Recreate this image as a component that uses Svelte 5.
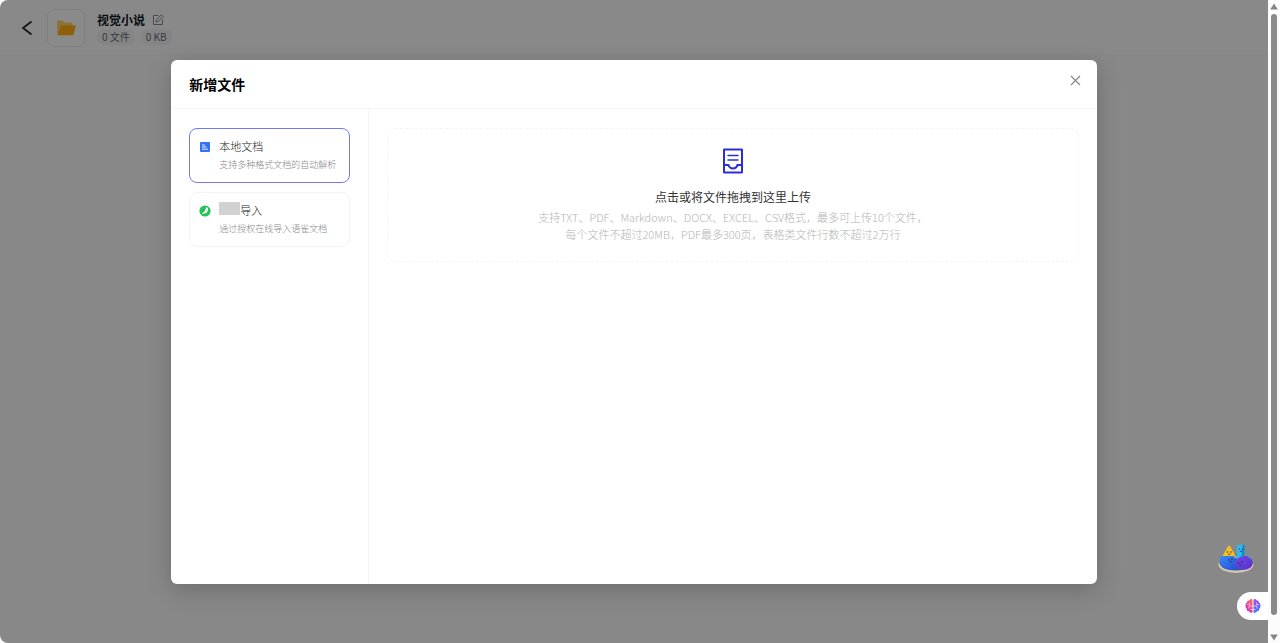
<script lang="ts">
    let selected = 'local';

    const sources = [
        { id: 'local', name: '本地文档', desc: '支持多种格式文档的自动解析' },
        { id: 'online', name: '导入', desc: '通过授权在线导入语雀文档' }
    ];
</script>

<div class="layout">
    <div class="page">
        <header class="page-header">
            <button class="plain" aria-label="返回">
                <svg width="12" height="16" viewBox="0 0 12 16" fill="none" stroke="#222" stroke-width="1.7">
                    <path d="M10.5 1.5 2 8l8.500 6.500" />
                </svg>
            </button>
            <div class="folder">
                <svg width="20" height="18" viewBox="0 0 20 18">
                    <path d="M1 2.500Q1 1.500 2 1.500h4.500l2 2H15q1.500 0 1.500 1.500v9H1z" fill="#ffcf63" />
                    <path d="M5 6.500h14.200q.7 0 .5.800l-2.200 8.200q-.2.800-1 .800H1.200z" fill="#ffad0f" />
                </svg>
            </div>
            <div class="info">
                <div class="name-row">
                    <h1>视觉小说</h1>
                    <button class="plain" aria-label="编辑名称">
                        <svg width="12" height="12" viewBox="0 0 12 12" fill="none" stroke="#83878e">
                            <path d="M6.500 1.500h-5v9h9v-5M4 8l.4-2.200L9.500.8l1.700 1.700L6.200 7.600z" />
                        </svg>
                    </button>
                </div>
                <div class="tags">
                    <span>0 文件</span>
                    <span>0 KB</span>
                </div>
            </div>
        </header>

        <div class="mask">
            <div class="modal" role="dialog" aria-labelledby="modal-title">
                <div class="modal-header">
                    <h2 id="modal-title">新增文件</h2>
                    <button class="plain" aria-label="关闭">
                        <svg width="11" height="13" viewBox="0 -1 11 13" stroke="#888" stroke-width="1.2">
                            <path d="m1 1 9 9M10 1l-9 9" />
                        </svg>
                    </button>
                </div>
                <div class="modal-body">
                    <div class="sources">
                        {#each sources as source}
                            <button
                                class="source"
                                class:active={selected === source.id}
                                on:click={() => selected = source.id}
                            >
                                {#if source.id === 'local'}
                                    <svg class="source-icon" width="12" height="12" viewBox="0 0 12 12">
                                        <rect x="1" y="1" width="10" height="10" rx="1" fill="#3370ff" />
                                        <path d="M3 4h3M3 6h4.500M3 8.200h6" stroke="#fff" stroke-width=".9" />
                                    </svg>
                                {:else}
                                    <svg class="source-icon" width="12" height="12" viewBox="0 0 12 12">
                                        <circle cx="6" cy="6" r="5.600" fill="#25c25b" />
                                        <path d="M7.200 2.300 9 3q.4 4.800-3.500 5.600-1.500.3-3 .1Q6.500 7 7.200 2.300z" fill="#fff" />
                                    </svg>
                                {/if}
                                <span class="source-text">
                                    <span class="source-name">
                                        {#if source.id === 'online'}<span class="redacted"></span>{/if}{source.name}
                                    </span>
                                    <span class="source-desc">{source.desc}</span>
                                </span>
                            </button>
                        {/each}
                    </div>
                    <div class="upload">
                        <button class="dropzone">
                            <svg width="20" height="26" viewBox="0 0 20 26" fill="none" stroke="#2b2fdc" stroke-width="2">
                                <rect x="1" y="1.500" width="18" height="23" rx=".3" />
                                <path d="M1 17h4.500c.5 2 2.200 3.400 4.500 3.400s4-1.400 4.500-3.400H19" />
                                <path d="M5 7.500h10M5 12h10" stroke-width="1.500" stroke-linecap="round" />
                            </svg>
                            <span class="drop-title">点击或将文件拖拽到这里上传</span>
                            <span class="drop-hint">
                                支持TXT、PDF、Markdown、DOCX、EXCEL、CSV格式，最多可上传10个文件，<br />
                                每个文件不超过20MB，PDF最多300页，表格类文件行数不超过2万行
                            </span>
                        </button>
                    </div>
                </div>
            </div>
        </div>

        <!-- Floating helpers -->
        <div class="floats">
            <button class="plain mascot" aria-label="助手">
                <svg width="36" height="30" viewBox="0 0 36 30">
                    <defs>
                        <linearGradient id="blue" x1="0" y1="0" x2="1" y2="1">
                            <stop offset="0" stop-color="#348cf5" />
                            <stop offset="1" stop-color="#264bd5" />
                        </linearGradient>
                        <linearGradient id="purple" x1="0" y1="0" x2="1" y2="1">
                            <stop offset="0" stop-color="#7546e9" />
                            <stop offset="1" stop-color="#5531c9" />
                        </linearGradient>
                    </defs>
                    <ellipse cx="18" cy="20.500" rx="17.500" ry="8.500" fill="#d9c6b0" />
                    <ellipse cx="18" cy="18.500" rx="16.500" ry="8" fill="#275ba8" />
                    <path d="M26 13h7v7h-7z" fill="#27a9dc" />
                    <path d="M10 2.500q1-2 2.200 0l5.500 9.500q1 2-1 2H5.500q-2 0-1-2z" fill="#f6bf24" />
                    <path d="M19 2q0-1.500 1.500-1.400l5 .3Q27 1 26.900 2.500L26 15h-8z" fill="#30b9ec" />
                    <path d="M24.500 1h1q1.500.1 1.400 1.500L26 14h-2.500z" fill="#168ac9" />
                    <path d="M2 13.500q0-1.500 2-1.500h12l4 12q-8 3.500-15 0Q2 22 2 13.500z" fill="url(#blue)" />
                    <ellipse cx="26" cy="19" rx="8.800" ry="6.800" fill="url(#purple)" />
                    <g fill="#172347">
                        <circle cx="9.500" cy="8" r=".7" /><circle cx="13" cy="8" r=".7" />
                        <circle cx="21.500" cy="5" r=".6" /><circle cx="24.500" cy="5" r=".6" />
                        <circle cx="11" cy="16" r=".7" /><circle cx="14" cy="15" r=".7" />
                        <circle cx="20.500" cy="19" r=".7" /><circle cx="24" cy="18" r=".7" />
                    </g>
                    <path d="M10 10.500q1.300-1 2.500 0M22 7q1 1 2 0M12 18q1.500.5 2-1M21.500 21.500q1.500.5 2-1" fill="none" stroke="#172347" stroke-width=".7" />
                </svg>
            </button>
            <button class="plain brain" aria-label="智能助理">
                <svg width="16" height="16" viewBox="0 0 16 16">
                    <defs>
                        <linearGradient id="brain-left" x1="1" y1="0" x2="0" y2="1">
                            <stop offset="0" stop-color="#ff7a45" />
                            <stop offset=".5" stop-color="#f03f97" />
                            <stop offset="1" stop-color="#8d45f5" />
                        </linearGradient>
                        <linearGradient id="brain-right" x1="0" y1="0" x2="0" y2="1">
                            <stop offset="0" stop-color="#a64bea" />
                            <stop offset="1" stop-color="#3d7bff" />
                        </linearGradient>
                    </defs>
                    <path d="M7.500 1.500v13q-2.500 1-3.500-1.200-2.500 0-2.300-2.500Q.2 9.700.6 7.500 0 5.500 2 4.500 2.200 2.300 4.200 2.500 5.500.3 7.500 1.500z" fill="url(#brain-left)" />
                    <path d="M8.500 1.500v13q2.500 1 3.500-1.200 2.500 0 2.300-2.500 1.500-1.100 1.100-3.300.6-2-1.400-3Q13.800 2.300 11.800 2.500 10.500.3 8.500 1.500z" fill="url(#brain-right)" />
                    <path d="M4.500 4.500v2H2M7.500 8H4v2.500M7.500 11.500H5.500M11.500 4.500v2H14M8.500 8H12v2.500M8.500 11.500h2" fill="none" stroke="#fff" stroke-width=".6" />
                </svg>
            </button>
        </div>
    </div>

    <div class="scrollbar" aria-hidden="true">
        <svg width="8" height="7" viewBox="0 0 8 7"><path d="M4 .500 7.800 6.500H.2z" fill="#868686" /></svg>
        <div class="thumb"></div>
        <svg width="8" height="7" viewBox="0 0 8 7"><path d="M4 6.500 7.800.5H.2z" fill="#868686" /></svg>
    </div>
</div>

<style>
:global(body) {
    margin: 0;
    background: #fff;
}

.layout {
    display: flex;
    min-height: 100vh;
    font-family: "Noto Sans CJK SC", "Noto Sans", sans-serif;
}

.layout * {
    box-sizing: border-box;
}

button {
    font-family: inherit;
    cursor: pointer;
}

.plain {
    display: flex;
    padding: 0;
    border: none;
    background: none;
}

.page {
    position: relative;
    flex: 1;
    background: #f8f8f9;
    border-radius: 8px 0 0 8px;
    overflow: hidden;
}

.page-header {
    display: flex;
    align-items: center;
    height: 56px;
    padding-left: 21px;
    background: #fafafa;
    border-bottom: 1px solid #f4f4f4;
}

.folder {
    display: flex;
    align-items: center;
    justify-content: center;
    width: 38px;
    height: 38px;
    margin-left: 14px;
    border: 1px solid #e8e8ea;
    border-radius: 8px;
    background: #fcfcfc;
}

.info {
    margin-left: 12px;
}

.name-row {
    display: flex;
    align-items: center;
    gap: 7px;
}

h1 {
    margin: 0;
    font-size: 12px;
    line-height: 18px;
    color: #111827;
}

.tags {
    display: flex;
    gap: 6px;
}

.tags span {
    padding: 0 5px;
    border-radius: 8px;
    background: #f0f0f1;
    font-size: 10px;
    line-height: 16px;
    color: #666b75;
}

.mask {
    position: absolute;
    inset: 0;
    display: flex;
    justify-content: center;
    padding: 60px 0 59px;
    background: rgba(0, 0, 0, 0.45);
}

.modal {
    display: flex;
    flex-direction: column;
    width: 73%;
    background: #fff;
    border-radius: 6px;
    box-shadow: 0 6px 24px rgba(0, 0, 0, 0.2);
}

.modal-header {
    display: flex;
    justify-content: space-between;
    align-items: flex-start;
    padding: 14px 16px 14px 18px;
    border-bottom: 1px solid #f5f5f6;
}

.modal-header h2 {
    margin: 0;
    font-size: 14px;
    line-height: 20px;
    color: #000;
}

.modal-body {
    display: flex;
    flex: 1;
}

.sources {
    display: flex;
    flex-direction: column;
    gap: 9px;
    width: 198px;
    padding: 19px 18px;
    border-right: 1px solid #f5f5f6;
}

.source {
    display: flex;
    gap: 8px;
    padding: 9px;
    border: 1px solid #f3f3f4;
    border-radius: 8px;
    background: #fff;
    text-align: left;
}

.source.active {
    border-color: #7479f2;
}

.source-icon {
    flex: none;
    margin-top: 3px;
}

.source-text,
.source-name,
.source-desc {
    display: block;
    white-space: nowrap;
}

.source-name {
    font-size: 11px;
    line-height: 16px;
    color: #222;
    font-weight: 300;
}

.redacted {
    display: inline-block;
    width: 21px;
    height: 13px;
    background: #d2d2d2;
    vertical-align: top;
}

.source-desc {
    margin-top: 2px;
    font-size: 9px;
    line-height: 17px;
    color: #888;
    font-weight: 300;
}

.upload {
    flex: 1;
    padding: 19px 18px;
}

.dropzone {
    display: flex;
    flex-direction: column;
    align-items: center;
    width: 100%;
    padding: 19px 16px 18px;
    border: 1px dashed #f5f5f5;
    border-radius: 8px;
    background: #fff;
}

.drop-title {
    margin-top: 13px;
    font-size: 12px;
    line-height: 20px;
    color: #333;
}

.drop-hint {
    margin-top: 2px;
    font-size: 11px;
    line-height: 17px;
    color: #b4b4b4;
    font-weight: 300;
}

.floats {
    position: absolute;
    right: 0;
    bottom: 23px;
    display: flex;
    flex-direction: column;
    align-items: flex-end;
    gap: 18px;
}

.mascot {
    margin-right: 14px;
}

.brain {
    align-items: center;
    width: 31px;
    height: 28px;
    padding-left: 8px;
    border-radius: 14px 0 0 14px;
    background: #fff;
}

.scrollbar {
    display: flex;
    flex-direction: column;
    align-items: center;
    width: 12px;
    padding: 3px 0 2px;
    background: #fcfcfc;
}

.thumb {
    flex: 1;
    width: 6px;
    margin: 4px 0 19px;
    border-radius: 3px;
    background: #8a8a8a;
}
</style>
